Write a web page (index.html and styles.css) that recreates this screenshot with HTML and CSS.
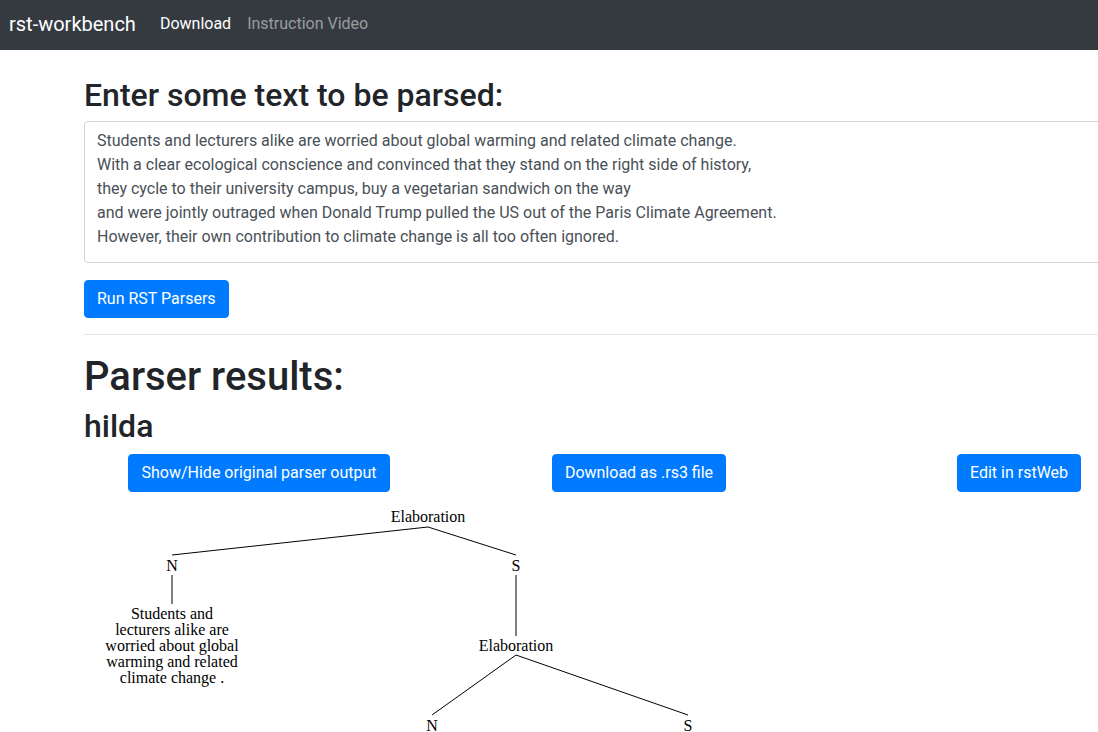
FILE: index.html
```html
<!DOCTYPE html>
<html lang="en">
<head>
<meta charset="utf-8">
<title>rst-workbench</title>
<link rel="stylesheet" href="styles.css">
</head>
<body>
<nav class="navbar">
  <a class="brand" href="#">rst-workbench</a>
  <a class="nav-link active" href="#">Download</a>
  <a class="nav-link" href="#">Instruction Video</a>
</nav>
<main class="container">
  <h2 class="h-enter">Enter some text to be parsed:</h2>
  <textarea class="form-control">Students and lecturers alike are worried about global warming and related climate change.
With a clear ecological conscience and convinced that they stand on the right side of history,
they cycle to their university campus, buy a vegetarian sandwich on the way
and were jointly outraged when Donald Trump pulled the US out of the Paris Climate Agreement.
However, their own contribution to climate change is all too often ignored.</textarea>
  <button class="btn">Run RST Parsers</button>
  <hr class="divider">
  <h1 class="h-results">Parser results:</h1>
  <h2 class="h-parser">hilda</h2>
  <div class="btn-row">
    <div class="btn-cell"><button class="btn">Show/Hide original parser output</button></div>
    <div class="btn-cell"><button class="btn">Download as .rs3 file</button></div>
    <div class="btn-cell"><button class="btn">Edit in rstWeb</button></div>
  </div>
  <svg class="tree" width="1109" height="260" viewBox="84 491 1109 260" xmlns="http://www.w3.org/2000/svg">
    <g fill="#000" font-family="'Liberation Serif', 'Times New Roman', serif" font-size="16" text-anchor="middle">
      <text x="428" y="521">Elaboration</text>
      <text x="172" y="570">N</text>
      <text x="516" y="570">S</text>
      <text x="172" y="618">Students and</text>
      <text x="172" y="634">lecturers alike are</text>
      <text x="172" y="650">worried about global</text>
      <text x="172" y="666">warming and related</text>
      <text x="172" y="682">climate change .</text>
      <text x="516" y="650">Elaboration</text>
      <text x="432" y="730">N</text>
      <text x="688" y="730">S</text>
    </g>
    <g stroke="#000" stroke-width="1" fill="none">
      <path d="M428 526 L172 554"/>
      <path d="M428 526 L516 554"/>
      <path d="M172 574 L172 603"/>
      <path d="M516 574 L516 635"/>
      <path d="M516 654 L432 714"/>
      <path d="M516 654 L688 714"/>
    </g>
  </svg>
</main>
</body>
</html>
```

FILE: styles.css
```css
html, body {
  margin: 0;
  overflow-x: hidden;
}
body {
  font-family: Roboto, "Liberation Sans", Arial, sans-serif;
  font-size: 16px;
  line-height: 1.5;
  color: #212529;
  background: #fff;
}
.navbar {
  height: 50px;
  box-sizing: border-box;
  background: #343a40;
  display: flex;
  align-items: center;
  padding: 0 8px 2px 9px;
}
.navbar a {
  text-decoration: none;
}
.brand {
  font-size: 20px;
  line-height: 30px;
  color: #fff;
  margin-right: 16px;
}
.nav-link {
  font-size: 16px;
  line-height: 24px;
  padding: 0 8px;
  color: rgba(255, 255, 255, 0.5);
}
.nav-link.active {
  color: #fff;
}
.container {
  width: 1140px;
  box-sizing: border-box;
  margin-left: 69px;
  padding: 0 15px;
}
h1, h2 {
  font-weight: 500;
  line-height: 1.2;
  margin: 0;
}
.h-enter {
  font-size: 32px;
  margin-top: 26px;
  margin-bottom: 7px;
}
.form-control {
  display: block;
  width: 100%;
  height: 142px;
  box-sizing: border-box;
  padding: 7px 12px 5px 12px;
  font-family: Roboto, "Liberation Sans", Arial, sans-serif;
  font-size: 16px;
  line-height: 24px;
  color: #495057;
  background: #fff;
  border: 1px solid #ced4da;
  border-radius: 4px;
  resize: vertical;
  margin: 0 0 17px 0;
  overflow: hidden;
}
.btn {
  display: inline-block;
  font-family: Roboto, "Liberation Sans", Arial, sans-serif;
  font-size: 16px;
  line-height: 24px;
  padding: 6px 12px;
  color: #fff;
  background: #007bff;
  border: 1px solid #007bff;
  border-radius: 4px;
  cursor: pointer;
}
.divider {
  margin: 16px 0 18px 0;
  border: 0;
  border-top: 1px solid rgba(0, 0, 0, 0.1);
}
.h-results {
  font-size: 40px;
  margin-bottom: 6px;
}
.h-parser {
  font-size: 32px;
  margin-bottom: 8px;
}
.btn-row {
  display: grid;
  grid-template-columns: repeat(3, 1fr);
  margin: 0 -15px;
}
.btn-cell {
  text-align: center;
}
.tree {
  display: block;
}
```
